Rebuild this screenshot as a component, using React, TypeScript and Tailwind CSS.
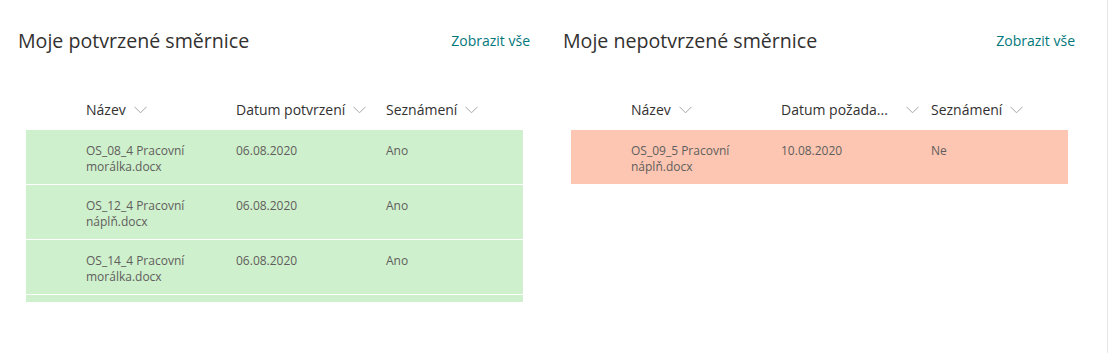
interface Row {
  name: string[]
  date: string
  ack: string
}

const confirmed: Row[] = [
  { name: ['OS_08_4 Pracovní', 'morálka.docx'], date: '06.08.2020', ack: 'Ano' },
  { name: ['OS_12_4 Pracovní', 'náplň.docx'], date: '06.08.2020', ack: 'Ano' },
  { name: ['OS_14_4 Pracovní', 'morálka.docx'], date: '06.08.2020', ack: 'Ano' },
  { name: [], date: '', ack: '' },
]

const unconfirmed: Row[] = [
  { name: ['OS_09_5 Pracovní', 'náplň.docx'], date: '10.08.2020', ack: 'Ne' },
]

function Chevron({ className }: { className?: string }) {
  return (
    <svg width="13" height="8" viewBox="0 0 13 8" className={className} fill="none">
      <polyline points="0.5,0.8 6.5,6.8 12.5,0.8" stroke="#a8a6a4" strokeWidth="1" />
    </svg>
  )
}

function HeaderCell({ label, wide }: { label: string; wide?: boolean }) {
  return (
    <div className="w-[150px] shrink-0 flex items-center text-[14px] text-[#323130]">
      <span className="whitespace-nowrap">{label}</span>
      <Chevron className={`${wide ? 'ml-[18px]' : 'ml-[8px]'} shrink-0`} />
    </div>
  )
}

function Panel({
  title,
  dateLabel,
  rows,
  rowBg,
  clip,
  dateWide,
}: {
  title: string
  dateLabel: string
  rows: Row[]
  rowBg: string
  clip?: boolean
  dateWide?: boolean
}) {
  return (
    <section className="w-[545px] pl-[18px] pr-[15px]">
      <div className="flex items-center justify-between h-[28px] mt-[27px]">
        <h2 className="text-[19.6px] text-[#323130] leading-[28px]">{title}</h2>
        <a className="text-[14px] text-[#03787c] leading-[20px]">Zobrazit vše</a>
      </div>
      <div className="ml-[8px] mr-[7px] mt-[34px]">
        <div className="flex h-[41px] pl-[60px] items-center">
          <HeaderCell label="Název" />
          <HeaderCell label={dateLabel} wide={dateWide} />
          <HeaderCell label="Seznámení" />
        </div>
        <div className={clip ? 'h-[172px] overflow-hidden' : ''}>
          {rows.map((r, i) => (
            <div
              key={i}
              className={`${rowBg} flex pl-[60px] pt-[13px] h-[55px] border-b border-white text-[12px] leading-[16px] text-[#605e5c]`}
            >
              <div className="w-[150px] shrink-0">
                {r.name.map((n) => (
                  <div key={n}>{n}</div>
                ))}
              </div>
              <div className="w-[150px] shrink-0">{r.date}</div>
              <div className="w-[120px] shrink-0">{r.ack}</div>
            </div>
          ))}
        </div>
      </div>
    </section>
  )
}

export default function App() {
  return (
    <div
      className="w-[1109px] h-[353px] bg-white overflow-hidden"
      style={{ fontFamily: '"Open Sans", "Noto Sans", sans-serif' }}
    >
      <div className="w-[1108px] h-full border-r border-[#e6e6e6] flex">
        <Panel
          title="Moje potvrzené směrnice"
          dateLabel="Datum potvrzení"
          rows={confirmed}
          rowBg="bg-[#cff0cd]"
          clip
        />
        <Panel
          title="Moje nepotvrzené směrnice"
          dateLabel="Datum požada..."
          rows={unconfirmed}
          rowBg="bg-[#fdc6b2]"
          dateWide
        />
      </div>
    </div>
  )
}
